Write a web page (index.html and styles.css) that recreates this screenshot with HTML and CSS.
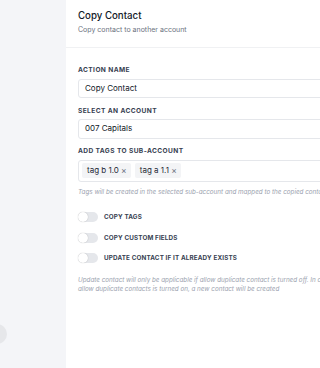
FILE: index.html
```html
<!DOCTYPE html>
<html>
<head>
<meta charset="utf-8">
<link rel="stylesheet" href="styles.css">
</head>
<body>
<div class="page">
  <div class="backdrop">
    <div class="knob"></div>
  </div>
  <div class="drawer">
    <div class="header">
      <div class="title">Copy Contact</div>
      <div class="subtitle">Copy contact to another account</div>
    </div>
    <div class="body">
      <div class="field">
        <div class="label">Action Name</div>
        <div class="input">Copy Contact</div>
      </div>
      <div class="field">
        <div class="label">Select an Account</div>
        <div class="input">007 Capitals</div>
      </div>
      <div class="field">
        <div class="label">Add Tags to Sub-Account</div>
        <div class="input tags">
          <span class="tag">tag b 1.0 <span class="x">×</span></span>
          <span class="tag">tag a 1.1 <span class="x">×</span></span>
        </div>
        <div class="hint">Tags will be created in the selected sub-account and mapped to the copied contact</div>
      </div>
      <div class="toggles">
        <div class="toggle-row"><span class="switch"><span class="dot"></span></span><span class="tlabel">Copy Tags</span></div>
        <div class="toggle-row"><span class="switch"><span class="dot"></span></span><span class="tlabel">Copy Custom Fields</span></div>
        <div class="toggle-row"><span class="switch"><span class="dot"></span></span><span class="tlabel">Update Contact if it already exists</span></div>
      </div>
      <div class="hint hint2">Update contact will only be applicable if allow duplicate contact is turned off. In case allow duplicate contacts is turned on, a new contact will be created</div>
    </div>
  </div>
</div>
</body>
</html>
```
FILE: styles.css
```css
* { box-sizing: border-box; }
html, body { margin: 0; padding: 0; }
body {
  font-family: Inter, "Noto Sans", sans-serif;
  color: #111827;
  overflow: hidden;
  width: 320px;
  height: 368px;
}
.page {
  display: flex;
  height: 368px;
  width: 320px;
  overflow: hidden;
}
.backdrop {
  flex: none;
  width: 66px;
  background: #f4f5f8;
  position: relative;
}
.knob {
  position: absolute;
  left: -13px;
  top: 324px;
  width: 20px;
  height: 20px;
  border-radius: 50%;
  background: #e6e7ea;
}
.drawer {
  flex: none;
  width: 300px;
  background: #fff;
  box-shadow: -1px 0 3px rgba(0,0,0,0.06);
}
.header {
  padding: 9px 12px 10px;
  border-bottom: 1px solid #f0f1f3;
  height: 48px;
}
.title {
  font-size: 9.7px;
  line-height: 14px;
  font-weight: 500;
  color: #111827;
}
.subtitle {
  margin-top: 2px;
  font-size: 7px;
  line-height: 10px;
  color: #6b7280;
}
.body {
  padding: 18px 0 0 12px;
}
.field { margin-bottom: 8.5px; }
.label {
  font-size: 6.6px;
  line-height: 9px;
  font-weight: 700;
  letter-spacing: 0.4px;
  text-transform: uppercase;
  color: #374151;
  margin-bottom: 3.5px;
}
.input {
  height: 19.5px;
  border: 1px solid #e5e7eb;
  border-radius: 3px;
  padding: 0 6px;
  font-size: 8px;
  line-height: 17.5px;
  color: #111827;
}
.tags {
  height: 22px;
  display: flex;
  align-items: center;
  gap: 4px;
  padding: 0 3px;
}
.tag {
  background: #f3f4f6;
  border-radius: 2px;
  padding: 0 4px 0 5px;
  height: 15px;
  line-height: 15px;
  font-size: 8px;
  color: #1f2937;
}
.tag .x { color: #6b7280; font-size: 8.5px; }
.hint {
  margin-top: 6px;
  font-size: 6.3px;
  line-height: 9px;
  font-style: italic;
  color: #9ca3af;
  white-space: nowrap;
}
.toggles {
  margin-top: 15.5px;
  display: flex;
  flex-direction: column;
  gap: 10.5px;
}
.toggle-row {
  display: flex;
  align-items: center;
  height: 10px;
}
.switch {
  width: 20px;
  height: 10px;
  border-radius: 5px;
  background: #e5e7eb;
  position: relative;
  margin-right: 6px;
}
.dot {
  position: absolute;
  left: 0;
  top: 0;
  width: 10px;
  height: 10px;
  border-radius: 50%;
  background: #fff;
  box-shadow: 0 0 1px rgba(0,0,0,0.3);
}
.tlabel {
  font-size: 6.3px;
  font-weight: 700;
  letter-spacing: 0.15px;
  text-transform: uppercase;
  color: #374151;
}
.hint2 {
  margin-top: 12.5px;
  white-space: normal;
  width: 270px;
}
```
